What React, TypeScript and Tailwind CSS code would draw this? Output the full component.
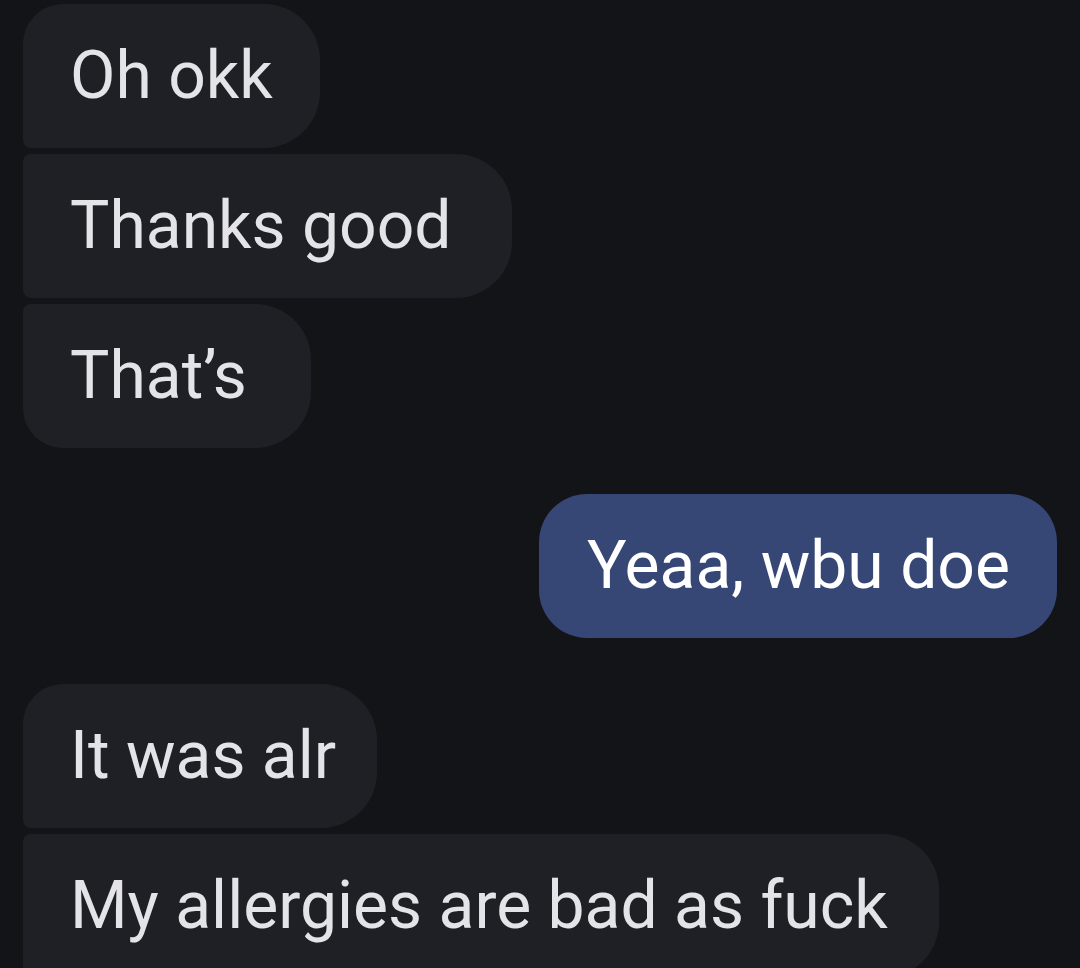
import React from "react";

type Msg = {
  text: string;
  mine?: boolean;
  corners: string;
  gapTop: string;
  pad: string;
};

const messages: Msg[] = [
  { text: "Oh okk", corners: "rounded-tl-[40px] rounded-bl-[8px] rounded-r-[56px]", gapTop: "mt-[4px]", pad: "pl-[47px] pr-[47px]" },
  { text: "Thanks good", corners: "rounded-l-[8px] rounded-r-[56px]", gapTop: "mt-[6px]", pad: "pl-[47px] pr-[60px]" },
  { text: "That’s", corners: "rounded-tl-[8px] rounded-bl-[40px] rounded-r-[56px]", gapTop: "mt-[6px]", pad: "pl-[47px] pr-[64px]" },
  { text: "Yeaa, wbu doe", mine: true, corners: "rounded-[48px]", gapTop: "mt-[46px]", pad: "pl-[48px] pr-[47px]" },
  { text: "It was alr", corners: "rounded-tl-[40px] rounded-bl-[8px] rounded-r-[56px]", gapTop: "mt-[46px]", pad: "pl-[47px] pr-[41px]" },
  { text: "My allergies are bad as fuck", corners: "rounded-l-[8px] rounded-r-[56px]", gapTop: "mt-[6px]", pad: "pl-[47px] pr-[51px]" },
];

const Bubble: React.FC<{ msg: Msg }> = ({ msg }) => (
  <div className={`flex ${msg.mine ? "justify-end" : "justify-start"} ${msg.gapTop}`}>
    <div
      className={`h-[144px] flex items-center whitespace-nowrap text-[66px] leading-none ${msg.pad} ${msg.corners} ${
        msg.mine ? "bg-[#364675] text-white" : "bg-[#1f2025] text-[#e3e3e8]"
      }`}
    >
      {msg.text}
    </div>
  </div>
);

export default function App() {
  return (
    <div
      className="w-[1080px] h-[968px] overflow-hidden bg-[#131418] px-[23px]"
      style={{ fontFamily: "Roboto, 'Noto Sans', sans-serif" }}
    >
      {messages.map((m, i) => (
        <Bubble key={i} msg={m} />
      ))}
    </div>
  );
}
